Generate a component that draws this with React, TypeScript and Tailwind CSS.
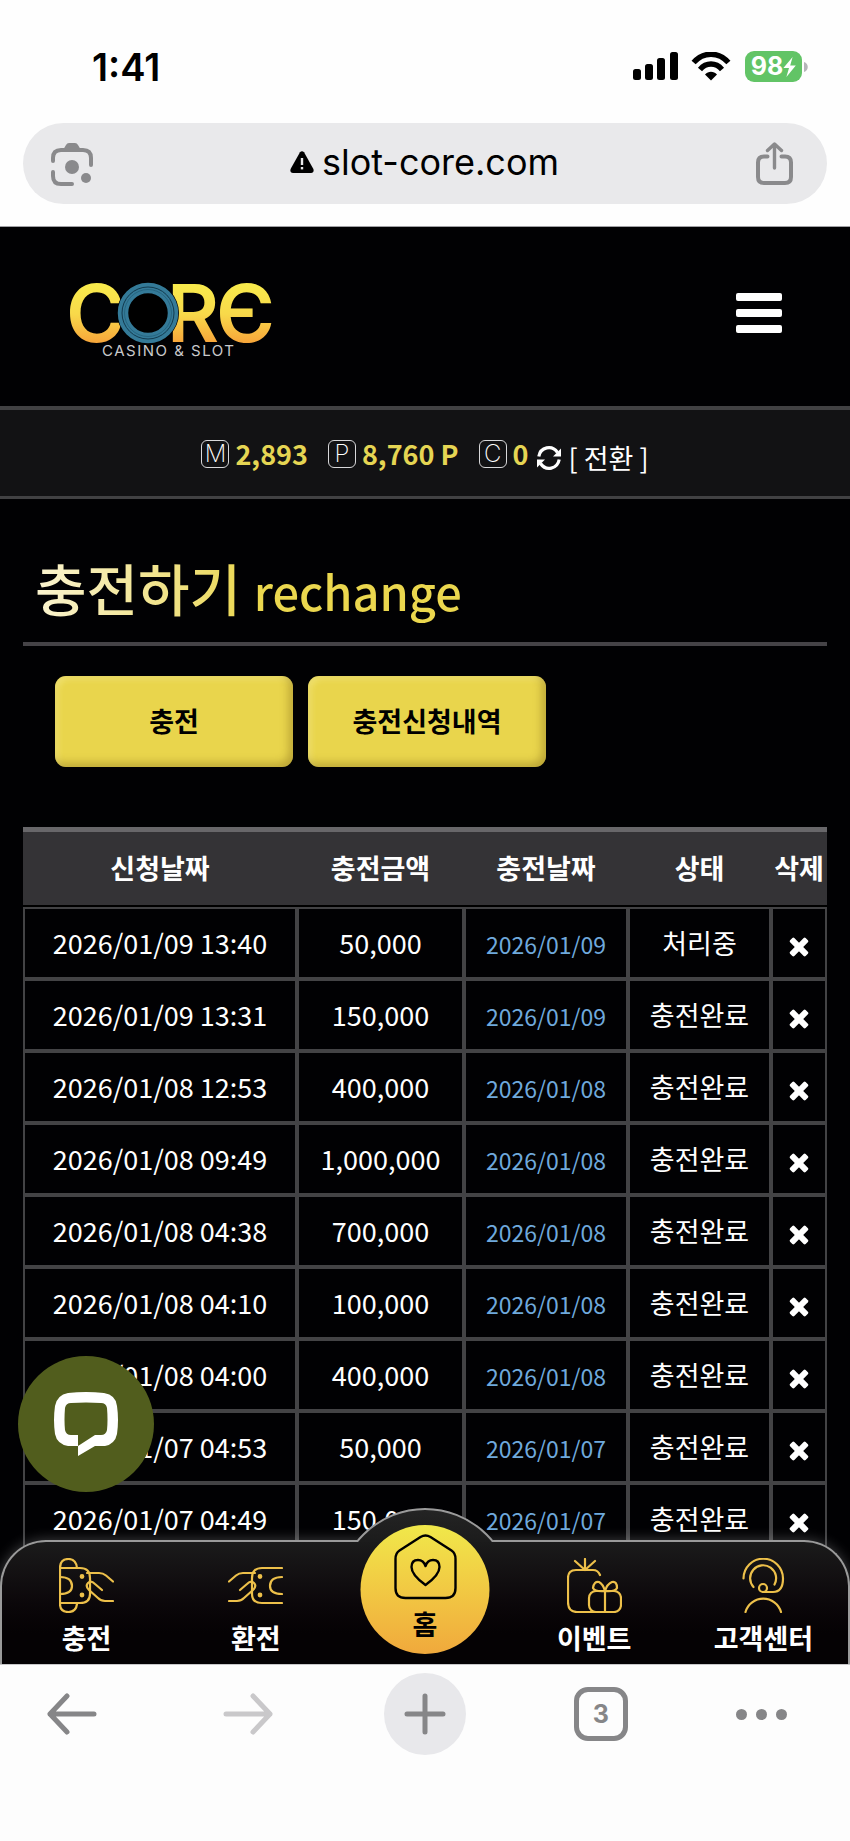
const balances = [
  { mark: "M", value: "2,893" },
  { mark: "P", value: "8,760 P" },
  { mark: "C", value: "0" },
];

const rows = [
  { requested: "2026/01/09 13:40", amount: "50,000", date: "2026/01/09", status: "처리중" },
  { requested: "2026/01/09 13:31", amount: "150,000", date: "2026/01/09", status: "충전완료" },
  { requested: "2026/01/08 12:53", amount: "400,000", date: "2026/01/08", status: "충전완료" },
  { requested: "2026/01/08 09:49", amount: "1,000,000", date: "2026/01/08", status: "충전완료" },
  { requested: "2026/01/08 04:38", amount: "700,000", date: "2026/01/08", status: "충전완료" },
  { requested: "2026/01/08 04:10", amount: "100,000", date: "2026/01/08", status: "충전완료" },
  { requested: "2026/01/08 04:00", amount: "400,000", date: "2026/01/08", status: "충전완료" },
  { requested: "2026/01/07 04:53", amount: "50,000", date: "2026/01/07", status: "충전완료" },
  { requested: "2026/01/07 04:49", amount: "150,000", date: "2026/01/07", status: "충전완료" },
];

const cell = "border-2 border-[#434345] p-0";

function StatusBar() {
  return (
    <div className="flex h-[123px] items-center justify-between pt-[10px] pr-[42px] pl-[92px]">
      <span className="text-[38px] leading-none font-semibold">1:41</span>
      <div className="flex items-center">
        <svg width="46" height="29" viewBox="0 0 46 29" fill="black">
          <rect x="0" y="17" width="8" height="11" rx="2.5" />
          <rect x="12" y="12" width="8" height="16" rx="2.5" />
          <rect x="24" y="6" width="8" height="22" rx="2.5" />
          <rect x="37" y="0" width="8" height="28" rx="2.5" />
        </svg>
        <svg className="ml-3" width="40" height="29" viewBox="0 0 40 29">
          <g fill="none" stroke="black" strokeWidth="5.4">
            <path d="M2.6 10.6C12.2-.6 27.8-.6 37.4 10.6" />
            <path d="M9 17.4C15.2 10.2 24.8 10.2 31 17.4" />
          </g>
          <path d="M14 22.6C17.4 18.8 22.6 18.8 26 22.6L20 28.4Z" fill="black" />
        </svg>
        <div className="ml-[14px] flex h-[31px] w-[57px] items-center justify-center rounded-[9px] bg-[#62c466] text-white">
          <span className="text-[25px] leading-none font-bold">98</span>
          <svg width="13" height="20" viewBox="0 0 13 20" fill="white">
            <path d="M9.6 0L0.4 11H6L3.4 20L12.8 8.6H7.2Z" />
          </svg>
        </div>
        <svg className="ml-[2px]" width="4" height="10" viewBox="0 0 4 10" fill="#b5b5b9">
          <path d="M0 0C5 1.6 5 8.4 0 10Z" />
        </svg>
      </div>
    </div>
  );
}

function AddressBar() {
  return (
    <div className="mx-[23px] flex h-[81px] items-center justify-between rounded-full bg-[#e9e9eb] pr-[34px] pl-7 text-[#8a8a8c]">
      <button aria-label="Lens">
        <svg width="42" height="44" viewBox="0 0 42 44" fill="none" stroke="currentColor" strokeWidth="4" strokeLinecap="round">
          <path d="M2 19V16Q2 8 10 8H32Q40 8 40 16V23" />
          <path d="M2 30V34Q2 42 10 42H21" />
          <path d="M12 8L15 3Q16 1 18 1H24Q26 1 27 3L30 8Z" fill="currentColor" stroke="none" />
          <circle cx="21" cy="25" r="7" fill="currentColor" stroke="none" />
          <circle cx="35" cy="36" r="5" fill="currentColor" stroke="none" />
        </svg>
      </button>
      <div className="flex items-center gap-2 pb-1 text-black">
        <svg width="24" height="22" viewBox="0 0 24 22">
          <path d="M10 1.2Q12-.8 14 1.2L23.4 18Q24.4 22 21 22H3Q-.4 22 .6 18Z" fill="black" />
          <path d="M12 7V14" stroke="#e9e9eb" strokeWidth="2.4" />
          <path d="M12 16V18.4" stroke="#e9e9eb" strokeWidth="2.4" />
        </svg>
        <span className="text-[36px] leading-none">slot-core.com</span>
      </div>
      <button aria-label="공유">
        <svg width="37" height="43" viewBox="0 0 37 43" fill="none" stroke="currentColor" strokeWidth="4" strokeLinecap="round" strokeLinejoin="round">
          <path d="M11.5 14.5H8Q2 14.5 2 20.5V35Q2 41 8 41H29Q35 41 35 35V20.5Q35 14.5 29 14.5H25.5" />
          <path d="M18.5 26V2.5M11.5 8.5L18.5 2L25.5 8.5" strokeWidth="3.4" />
        </svg>
      </button>
    </div>
  );
}

function Logo() {
  return (
    <svg role="img" aria-label="CORE CASINO & SLOT" width="214" height="100" viewBox="-4 -18 214 100">
      <defs>
        <linearGradient id="gold" gradientUnits="userSpaceOnUse" x1="0" y1="4" x2="0" y2="62">
          <stop offset="0" stopColor="#f8ea4c" />
          <stop offset="0.5" stopColor="#f8d94a" />
          <stop offset="1" stopColor="#f7a53a" />
        </linearGradient>
      </defs>
      <g fill="url(#gold)" className="text-[80px] font-semibold">
        <text x="-3" y="61">C</text>
        <text x="98" y="61">R</text>
        <text x="147" y="61">Є</text>
      </g>
      <circle cx="79" cy="32" r="31" fill="black" />
      <circle cx="79" cy="32" r="25" fill="none" stroke="#347a98" strokeWidth="10.5" />
      <circle cx="79" cy="32" r="26" fill="none" stroke="#123a4e" strokeWidth="1" />
      <circle cx="79" cy="32" r="23.5" fill="none" stroke="#1f5770" strokeWidth="0.6" />
      <text x="33" y="75" fill="#c9c9cb" className="text-[15px] tracking-widest">
        CASINO &amp; SLOT
      </text>
    </svg>
  );
}

function RefreshIcon() {
  return (
    <svg width="24" height="24" viewBox="0 0 24 24">
      <g fill="none" stroke="white" strokeWidth="3.2">
        <path d="M1.8 10.5C3.5 1 15 -1.5 20.5 6.5" />
        <path d="M22.2 13.5C20.5 23 9 25.5 3.5 17.5" />
      </g>
      <path d="M24 2.5V10.5H16ZM0 21.5V13.5H8Z" fill="white" />
    </svg>
  );
}

function DeleteIcon() {
  return (
    <svg className="mx-auto" width="20" height="20" viewBox="0 0 20 20" fill="white">
      <rect x="-1" y="7" width="22" height="6" rx="1.4" transform="rotate(45 10 10)" />
      <rect x="-1" y="7" width="22" height="6" rx="1.4" transform="rotate(-45 10 10)" />
    </svg>
  );
}

function ChargeIcon() {
  return (
    <svg width="55" height="55" viewBox="0 0 55 55" fill="none" stroke="#edc04a" strokeWidth="2.2" strokeLinecap="round" strokeLinejoin="round">
      <path d="M1 10Q1 1 9.5 1Q17 1 18 10M1 10V46Q1 54 9.5 54Q17 54 18 46" />
      <path d="M1 10H21Q31 10 31 20V36Q31 45 21 45H1" />
      <path d="M1 19Q13 19 13 28Q13 36 1 36" />
      <path d="M28 15H40Q44 15 47 17.5L54 23.5" />
      <path d="M43 32L36 26Q32 22 29 25Q26 28 30 32L39 40Q42 43 46 43H54" />
      <circle cx="23" cy="18.5" r="1.3" fill="#edc04a" />
      <circle cx="23" cy="37" r="1.3" fill="#edc04a" />
    </svg>
  );
}

function ExchangeIcon() {
  return (
    <svg width="55" height="55" viewBox="0 0 55 55" fill="none" stroke="#edc04a" strokeWidth="2.2" strokeLinecap="round" strokeLinejoin="round">
      <path d="M54 10H34Q24 10 24 20V36Q24 45 34 45H54" />
      <path d="M54 19Q42 19 42 28Q42 36 54 36" />
      <path d="M27 15H15Q11 15 8 17.5L1 23.5" />
      <path d="M12 32L19 26Q23 22 26 25Q29 28 25 32L16 40Q13 43 9 43H1" />
      <circle cx="32" cy="18.5" r="1.3" fill="#edc04a" />
      <circle cx="32" cy="37" r="1.3" fill="#edc04a" />
    </svg>
  );
}

function EventIcon() {
  return (
    <svg width="55" height="55" viewBox="0 0 55 55" fill="none" stroke="#edc04a" strokeWidth="2.2" strokeLinecap="round" strokeLinejoin="round">
      <path d="M18 1V12M8 3L18 12L28 3" />
      <path d="M33 17Q31 12 26 12H9Q1 12 1 20V44Q1 54 10 54H30" />
      <rect x="22" y="33" width="32" height="21" rx="7" />
      <path d="M38 33V54M38 33Q28 34 26 30Q27 23 32 24Q36 26 38 33Q40 26 45 24Q50 23 50 30Q48 34 38 33" />
    </svg>
  );
}

function SupportIcon() {
  return (
    <svg width="55" height="55" viewBox="0 0 55 55" fill="none" stroke="#edc04a" strokeWidth="2.2" strokeLinecap="round" strokeLinejoin="round">
      <path d="M7.5 20.5A19.7 19.7 0 0 1 47 20.5Q47 34 37 34H27" />
      <path d="M17.5 29A13 13 0 1 1 38.5 26.5" />
      <circle cx="27" cy="30" r="4" fill="#0f0e0f" />
      <path d="M9.5 54A18.5 18.5 0 0 1 45 54" />
    </svg>
  );
}

function BottomNav() {
  const left = [
    { label: "충전", icon: <ChargeIcon /> },
    { label: "환전", icon: <ExchangeIcon /> },
  ];
  const right = [
    { label: "이벤트", icon: <EventIcon /> },
    { label: "고객센터", icon: <SupportIcon /> },
  ];
  const link = "flex flex-col items-center gap-[7px] pt-4 text-[27px] leading-9 font-bold text-white";

  return (
    <nav className="absolute inset-x-0 bottom-0">
      <div className="grid h-[124px] grid-cols-5 rounded-t-[46px] border-2 border-b-0 border-[#9a9a9a] bg-linear-to-b from-[#1b1b1b] to-[#050204] to-75% shadow-[0_0_14px_rgba(255,255,255,0.25)]">
        {left.map((item) => (
          <a key={item.label} href="#" className={link}>
            {item.icon}
            {item.label}
          </a>
        ))}
        <span />
        {right.map((item) => (
          <a key={item.label} href="#" className={link}>
            {item.icon}
            {item.label}
          </a>
        ))}
      </div>

      {/* raised arc behind the home button */}
      <div className="absolute bottom-[122px] left-1/2 h-[34px] w-[176px] -translate-x-1/2 overflow-hidden">
        <div className="h-[176px] rounded-full border-2 border-[#9a9a9a] bg-linear-to-b from-[#242424] to-[#1b1b1b] to-20%" />
      </div>
      <a
        href="#"
        className="absolute bottom-[10px] left-1/2 flex size-[129px] -translate-x-1/2 flex-col items-center rounded-full bg-linear-to-b from-[#f0e84a] to-[#f0a93c] pt-[9px] text-[27px] leading-9 font-bold text-black"
      >
        <svg width="64" height="66" viewBox="0 0 64 66" fill="none" stroke="black" strokeWidth="2.4" strokeLinejoin="round">
          <path d="M27 3Q32 0 37 3L58 16.5Q62 19 62 25V54Q62 64 52 64H12Q2 64 2 54V25Q2 19 6 16.5Z" />
          <path d="M32 51Q18 41 18 33Q18 26 24.5 26Q30 26 32 32Q34 26 39.5 26Q46 26 46 33Q46 41 32 51Z" />
        </svg>
        <span className="mt-[6px]">홈</span>
      </a>
    </nav>
  );
}

function BrowserToolbar() {
  return (
    <div className="flex h-[177px] items-start justify-between border-t border-[#c8c8ca] bg-[#fdfdfd] pt-2 pr-[63px] pl-[31px] text-[#868688]">
      <button aria-label="뒤로" className="flex size-[82px] items-center justify-center">
        <svg width="50" height="42" viewBox="0 0 50 42" fill="none" stroke="currentColor" strokeWidth="5" strokeLinecap="round" strokeLinejoin="round">
          <path d="M47 21H3M20 3L3 21L20 39" />
        </svg>
      </button>
      <button aria-label="앞으로" className="flex size-[82px] items-center justify-center text-[#c9c8ca]">
        <svg width="50" height="42" viewBox="0 0 50 42" fill="none" stroke="currentColor" strokeWidth="5" strokeLinecap="round" strokeLinejoin="round">
          <path d="M3 21H47M30 3L47 21L30 39" />
        </svg>
      </button>
      <button aria-label="새 탭" className="flex size-[82px] items-center justify-center rounded-full bg-[#e8e8eb]">
        <svg width="42" height="42" viewBox="0 0 42 42" stroke="currentColor" strokeWidth="5" strokeLinecap="round">
          <path d="M21 3V39M3 21H39" />
        </svg>
      </button>
      <button className="flex size-[82px] items-center justify-center">
        <span className="flex size-[54px] items-center justify-center rounded-[14px] border-[5px] border-current text-[25px] leading-none font-bold">
          3
        </span>
      </button>
      <button aria-label="더보기" className="flex h-[82px] items-center gap-[9px]">
        <span className="size-[11px] rounded-full bg-current" />
        <span className="size-[11px] rounded-full bg-current" />
        <span className="size-[11px] rounded-full bg-current" />
      </button>
    </div>
  );
}

export default function App() {
  return (
    <div className="flex h-screen flex-col bg-[#fefefe] font-['Inter','Noto_Sans_CJK_KR',sans-serif] text-black">
      <StatusBar />
      <AddressBar />

      <div className="relative mt-[22px] min-h-0 flex-1 overflow-hidden border-t border-[#a0a0a4] bg-[#010103] font-['Noto_Sans_CJK_KR',sans-serif] text-white">
        <header className="flex h-[179px] items-center justify-between pr-[68px] pb-2 pl-[65px]">
          <a href="#" className="font-['Inter',sans-serif]">
            <Logo />
          </a>
          <button aria-label="메뉴" className="flex flex-col gap-2">
            <span className="h-2 w-[46px] rounded-xs bg-white" />
            <span className="h-2 w-[46px] rounded-xs bg-white" />
            <span className="h-2 w-[46px] rounded-xs bg-white" />
          </button>
        </header>

        <div className="flex h-[93px] items-center justify-center border-t-4 border-b-3 border-[#414143] bg-[#121214] pt-[2px]">
          {balances.map((item) => (
            <div key={item.mark} className="mr-5 flex items-center gap-[6px] last-of-type:mr-2">
              <span className="flex size-7 items-center justify-center rounded-[6px] border border-[#d8d8da] font-['Inter',sans-serif] text-[24px] leading-none font-extralight">
                {item.mark}
              </span>
              <span className="text-[27px] leading-10 font-bold text-[#e5d553]">{item.value}</span>
            </div>
          ))}
          <button className="flex items-center gap-2 pt-2 text-[27px] leading-8">
            <RefreshIcon />
            [ 전환 ]
          </button>
        </div>

        <main className="px-[23px] pt-11">
          <h1 className="border-b-4 border-[#454347] pb-[7px] pl-3 text-[56px] leading-[88px] font-medium">
            <span className="bg-linear-to-r from-[#fbf4d0] to-[#ebd74e] to-50% bg-clip-text text-transparent">
              충전하기 <span className="text-[47px]">rechange</span>
            </span>
          </h1>

          <div className="mt-[30px] flex gap-[15px] pl-8">
            <button className="h-[91px] w-[238px] rounded-[11px] bg-[#e9d54c] text-[27px] font-bold text-black shadow-[inset_-4px_-4px_8px_rgba(120,95,20,0.4),inset_3px_3px_6px_rgba(255,250,170,0.4)]">
              충전
            </button>
            <button className="h-[91px] w-[238px] rounded-[11px] bg-[#e9d54c] text-[27px] font-bold text-black shadow-[inset_-4px_-4px_8px_rgba(120,95,20,0.4),inset_3px_3px_6px_rgba(255,250,170,0.4)]">
              충전신청내역
            </button>
          </div>

          <table className="mt-[60px] w-full table-fixed border-separate border-spacing-0 text-center text-[27px] leading-10 whitespace-nowrap">
            <colgroup>
              <col />
              <col className="w-[167px]" />
              <col className="w-[164px]" />
              <col className="w-[143px]" />
              <col className="w-[56px]" />
            </colgroup>
            <thead>
              <tr className="h-20">
                {["신청날짜", "충전금액", "충전날짜", "상태", "삭제"].map((title) => (
                  <th key={title} className="border-t-[5px] border-b-2 border-t-[#68676a] border-b-black bg-[#343336] p-0 pb-[2px] font-bold">
                    {title}
                  </th>
                ))}
              </tr>
            </thead>
            <tbody>
              {rows.map((row) => (
                <tr key={row.requested} className="h-[72px]">
                  <td className={cell}>{row.requested}</td>
                  <td className={cell}>{row.amount}</td>
                  <td className="border-2 border-[#434345] p-0 pt-[2px] text-[23px] text-[#6fa9dc]">{row.date}</td>
                  <td className={cell}>{row.status}</td>
                  <td className={cell}>
                    <button aria-label="삭제" className="block w-full pt-2">
                      <DeleteIcon />
                    </button>
                  </td>
                </tr>
              ))}
            </tbody>
          </table>
        </main>

        <button aria-label="채팅" className="absolute bottom-[172px] left-[18px] flex size-[136px] items-center justify-center rounded-full bg-[#515d1d]">
          <svg width="64" height="64" viewBox="0 0 64 64">
            <path
              fillRule="evenodd"
              fill="white"
              d="M14 1Q32-1 50 1Q62 3 63 14Q65 28 63 42Q61 52 51 54H41L24 64V54H14Q3 52 1 42Q-1 28 1 14Q3 3 14 1ZM17 11Q12 11 11 16Q10 28 11 38Q12 43 17 43H24V54L41 43H47Q52 43 53 38Q54 28 53 16Q52 11 47 11Q32 10 17 11Z"
            />
          </svg>
        </button>

        <BottomNav />
      </div>

      <BrowserToolbar />
    </div>
  );
}
